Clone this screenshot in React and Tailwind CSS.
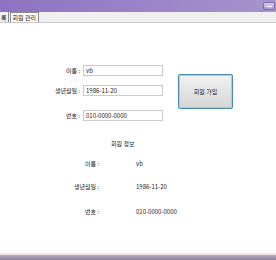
import React from "react";

const font = { fontFamily: '"Noto Sans CJK KR", "DejaVu Sans", sans-serif' };

function Field({ label, value, className = "" }) {
  return (
    <div className={`flex items-center ${className}`}>
      <span className="w-[83px] pr-[3px] text-right text-[6px] text-[#222]">{label}</span>
      <div className="w-[80px] h-[11px] border border-[#c8ccd2] bg-white flex items-center pl-[2px] text-[6px] text-[#222]">
        {value}
      </div>
    </div>
  );
}

function InfoRow({ label, value, className = "" }) {
  return (
    <div className={`flex items-center text-[6px] text-[#222] ${className}`}>
      <span className="w-[99px] text-right">{label}</span>
      <span className="ml-[37px]">{value}</span>
    </div>
  );
}

export default function App() {
  return (
    <div className="w-[276px] h-[260px] flex flex-col bg-white overflow-hidden" style={font}>
      <div className="h-[12px] flex items-center justify-end bg-gradient-to-r from-[#8f72c2] to-[#a694cc]">
        <div className="w-[12px] h-[8px] mr-[1px] rounded-[2px] border border-[#7c6aa8] bg-gradient-to-b from-[#d8d2e6] to-[#a89cc4] flex items-center justify-center">
          <div className="w-[5px] h-[1px] bg-white" />
        </div>
      </div>
      <div className="h-[11px] flex items-end bg-[#f0f0f0] border-b border-[#c9c9c9]">
        <div className="h-[10px] px-[1px] flex items-center border-r border-[#8a8a8a] text-[6px] text-[#111]">록</div>
        <div className="h-[10px] ml-[1px] px-[2px] flex items-center border border-b-0 border-[#8a8a8a] bg-white text-[6px] text-[#111]">
          회원 관리
        </div>
      </div>
      <div className="flex-1 flex flex-col">
        <div className="flex mt-[42px]">
          <div className="flex flex-col">
            <Field label="이름 :" value="vb" />
            <Field label="생년월일 :" value="1986-11-20" className="mt-[9px]" />
            <Field label="번호 :" value="010-0000-0000" className="mt-[14px]" />
          </div>
          <button className="ml-[15px] mt-[9px] w-[55px] h-[35px] rounded-[2px] border border-[#4a8ab8] bg-gradient-to-b from-[#f2f2f2] to-[#d6d6d6] text-[6px] text-[#222] shadow-[inset_0_0_0_1px_#9fd0ee]">
            회원 가입
          </button>
        </div>
        <div className="mt-[18px] ml-[111px] text-[6px] text-[#222]">회원 정보</div>
        <InfoRow label="이름 :" value="vb" className="mt-[11px]" />
        <InfoRow label="생년월일 :" value="1986-11-20" className="mt-[14px]" />
        <InfoRow label="번호 :" value="010-0000-0000" className="mt-[16px]" />
      </div>
      <div className="h-[2px] bg-[#f2e6ea]" />
      <div className="h-[5px] bg-gradient-to-b from-[#b8aac0] to-[#8e80a4]" />
    </div>
  );
}
